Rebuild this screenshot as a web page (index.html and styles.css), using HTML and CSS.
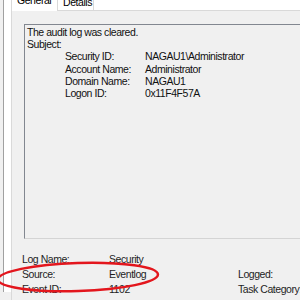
FILE: index.html
```html
<!DOCTYPE html>
<html>
<head>
<meta charset="utf-8" />
<title>Event Properties</title>
	<link rel="stylesheet" href="styles.css">
</head>

<body>
	<div class="outer">
		<div class="tabs">
			<div class="tab tab-active">General</div>
			<div class="tab">Details</div>
		</div>
		<div class="panel">
			<div class="desc">
				<div>The audit log was cleared.</div>
				<div>Subject:</div>
				<div class="sub"><span class="sub-label">Security ID:</span><span>NAGAU1\Administrator</span></div>
				<div class="sub"><span class="sub-label">Account Name:</span><span>Administrator</span></div>
				<div class="sub"><span class="sub-label">Domain Name:</span><span>NAGAU1</span></div>
				<div class="sub"><span class="sub-label">Logon ID:</span><span>0x11F4F57A</span></div>
			</div>
			<div class="fields">
				<span>Log Name:</span><span>Security</span><span></span><span></span>
				<span>Source:</span><span>Eventlog</span><span>Logged:</span><span></span>
				<span>Event ID:</span><span>1102</span><span>Task Category:</span><span></span>
			</div>
		</div>
	</div>

	<!-- red mark drawn over the Source row -->
	<svg class="mark" width="300" height="300" viewBox="0 0 300 300">
		<ellipse cx="78" cy="277" rx="80" ry="14" transform="rotate(-1.8 78 277)" fill="none" stroke="#e3161d" stroke-width="2.5" />
	</svg>
</body>
</html>
```

FILE: styles.css
```css
body {
	margin: 0;
	width: 300px; height: 300px;
	overflow: hidden;
	background-color: #f0f0f0;
	font: normal 10.5px "Liberation Sans", Arial, sans-serif;
	letter-spacing: -0.45px;
	color: #000;
	position: relative;
}
.outer {
	margin-left: 3px;
	height: 300px;
	border-left: 1px solid #a0a0a0;
	background-color: #fff;
	padding-left: 7px;
}
.tabs {
	display: flex;
	height: 18px;
	margin-top: -8px;
	align-items: flex-end;
}
.tab {
	height: 14px;
	line-height: 13px;
	padding: 0 5px;
	border: 1px solid #d9d9d9;
	border-bottom: none;
	background-color: #fff;
	margin-left: -1px;
	width: 25px;
}
.tab-active {
	height: 17px;
	width: 35px;
	margin-left: 0;
	margin-bottom: -1px;
	position: relative;
	z-index: 1;
	line-height: 13px;
}
.panel {
	border-left: 1px solid #d9d9d9;
	border-top: 1px solid #d9d9d9;
	background-color: #f0f0f0;
	height: 290px;
	padding: 13px 0 0 12px;
	box-sizing: border-box;
}
.desc {
	height: 215px;
	box-sizing: border-box;
	border-top: 1px solid #828790;
	border-left: 1px solid #828790;
	border-bottom: 1px solid #d4d4d4;
	padding: 1px 0 0 2px;
	line-height: 12.2px;
	color: #111;
}
.sub {
	display: flex;
	padding-left: 38px;
}
.sub-label {
	width: 80px;
}
.fields {
	display: grid;
	grid-template-columns: 87px 129px 70px 1fr;
	grid-auto-rows: 15px;
	line-height: 15px;
	margin: 13px 0 0 -2px;
	color: #1e1e1e;
	white-space: nowrap;
}
.mark {
	position: absolute;
	left: 0; top: 0;
	pointer-events: none;
}
```
